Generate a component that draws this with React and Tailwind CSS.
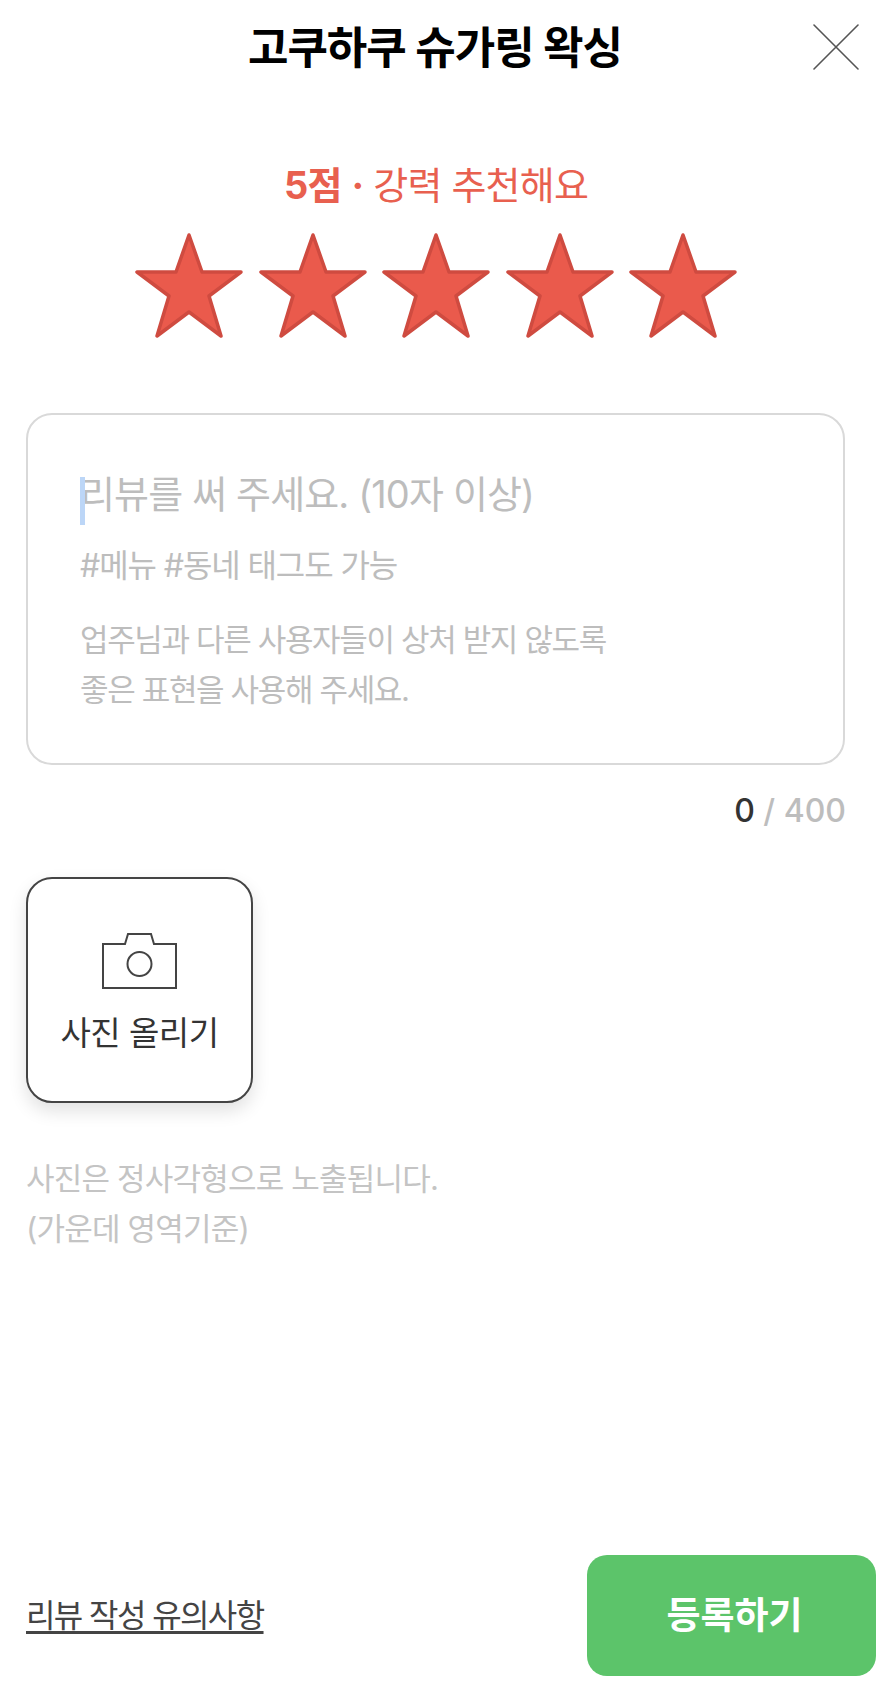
import React from 'react';

const FONT = 'font-["Inter","Noto_Sans_CJK_KR",sans-serif]';

const Star = () => (
  <svg width="120" height="112" viewBox="0 0 120 112" className="shrink-0">
    <polygon
      points="60,7 73,44 112,44 80,68 92,108 60,84 28,108 40,68 8,44 47,44"
      fill="#ea5a4c"
      stroke="#cf4b40"
      strokeWidth="3.5"
      strokeLinejoin="round"
    />
  </svg>
);

const CameraIcon = () => (
  <svg width="75" height="57" viewBox="0 0 75 57" fill="none" stroke="#444444" strokeWidth="2">
    <path d="M1 12H23L26 2H49L52 12H74V56H1Z" />
    <circle cx="37.5" cy="32" r="12" />
  </svg>
);

const CloseIcon = () => (
  <svg width="46" height="46" viewBox="0 0 46 46" fill="none" stroke="#555555" strokeWidth="1.6" strokeLinecap="round" className="block">
    <path d="M1 1L45 45M45 1L1 45" />
  </svg>
);

export default function App() {
  return (
    <div className={`${FONT} flex min-h-[1692px] w-full flex-col bg-white`}>
      <header className="relative flex h-[96px] items-center justify-center pr-[6px]">
        <h1 className="text-[44px] font-bold leading-[50px] tracking-[-1px] text-black">고쿠하쿠 슈가링 왁싱</h1>
        <button className="absolute right-[17px] top-[24px]">
          <CloseIcon />
        </button>
      </header>

      <p className="mt-[69px] pr-[4px] text-center text-[38px] leading-[40px] tracking-[-0.8px] text-[#e8604f]">
        <span className="font-bold">5점</span> <span className="font-bold">·</span> 강력 추천해요
      </p>

      <div className="mt-[23px] flex justify-center gap-[3.5px] pr-[4px]">
        <Star />
        <Star />
        <Star />
        <Star />
        <Star />
      </div>

      <section className="ml-[26px] mr-[31px] mt-[73px] flex h-[352px] flex-col rounded-[26px] border-2 border-[#d9d9d9] px-[52px] pt-[54px] text-[#bdbdbd]">
        <div className="relative">
          <span className="absolute left-0 top-[8px] h-[48px] w-[5px] bg-[#bcd6f7]" />
          <p className="text-[38px] leading-[50px] tracking-[-0.86px]">리뷰를 써 주세요. (10자 이상)</p>
        </div>
        <p className="mt-[27px] text-[32px] leading-[40px] tracking-[-1.1px]">#메뉴 #동네 태그도 가능</p>
        <p className="mt-[29px] text-[31px] leading-[50px] tracking-[-1.35px]">
          업주님과 다른 사용자들이 상처 받지 않도록
          <br />
          좋은 표현을 사용해 주세요.
        </p>
      </section>

      <p className="mr-[30px] mt-[26px] text-right text-[32px] font-medium leading-[40px] text-[#bdbdbd]">
        <span className="text-[#333333]">0</span> / 400
      </p>

      <button className="ml-[26px] mt-[46px] flex h-[226px] w-[227px] flex-col items-center rounded-[26px] border-2 border-[#444444] bg-white pt-[53px] shadow-[0_8px_18px_rgba(0,0,0,0.12)]">
        <CameraIcon />
        <span className="mt-[22px] text-[33px] leading-[44px] tracking-[-0.5px] text-[#333333]">사진 올리기</span>
      </button>

      <p className="ml-[26px] mt-[51px] text-[31px] leading-[50px] tracking-[-0.8px] text-[#c4c4c4]">
        사진은 정사각형으로 노출됩니다.
        <br />
        (가운데 영역기준)
      </p>

      <footer className="mb-[16px] mt-auto flex items-center justify-between pl-[26px]">
        <a className="text-[32px] leading-[40px] tracking-[-1.6px] text-[#444444] underline underline-offset-[4px]">리뷰 작성 유의사항</a>
        <button className="flex h-[121px] w-[289px] items-center justify-center rounded-[20px] bg-[#5cc46a] pl-[6px] text-[37px] font-bold text-white">
          등록하기
        </button>
      </footer>
    </div>
  );
}
